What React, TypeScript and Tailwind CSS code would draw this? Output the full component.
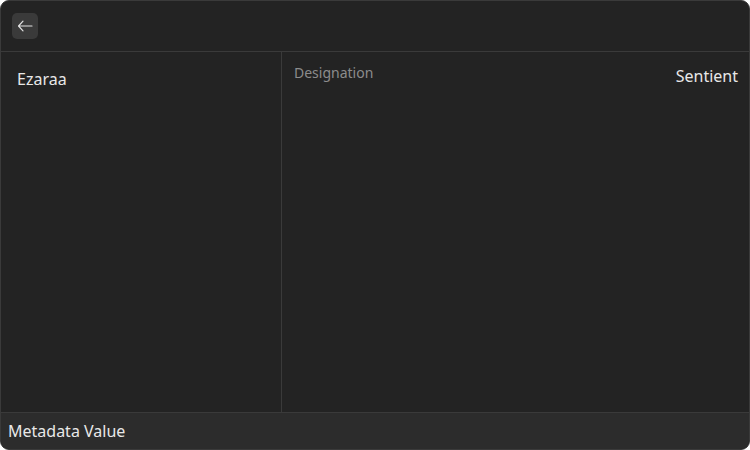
import React from 'react'

export default function App() {
  return (
    <div className="w-[750px] h-[450px] bg-white" style={{ fontFamily: '"Noto Sans", sans-serif' }}>
      <div className="w-full h-full flex flex-col bg-[#232323] border border-[#3a3a3a] rounded-[9px] overflow-hidden text-[#e8e8e8]">
        {/* header */}
        <div className="h-[51px] shrink-0 flex items-center px-[11px] border-b border-[#3a3a3a]">
          <button className="w-[26px] h-[26px] rounded-[5px] bg-[#3a3a3a] flex items-center justify-center text-[#e0e0e0]">
            <svg width="16" height="16" viewBox="0 0 16 16" fill="none" stroke="currentColor" strokeWidth="1.2" strokeLinecap="round" strokeLinejoin="round">
              <path d="M15 8H1.5M6 3.2 1.5 8 6 12.8" />
            </svg>
          </button>
        </div>

        {/* body */}
        <div className="flex-1 flex min-h-0">
          <div className="w-[281px] shrink-0 border-r border-[#3a3a3a] px-4 pt-[15px]">
            <div className="text-[16px] leading-[24px]">Ezaraa</div>
          </div>
          <div className="flex-1 flex justify-between items-start pl-[12px] pr-[11px] pt-[11px]">
            <div className="text-[14px] leading-[20px] text-[#8c8c8c]">Designation</div>
            <div className="text-[16px] leading-[24px] mt-[1px]">Sentient</div>
          </div>
        </div>

        {/* footer */}
        <div className="h-[37px] shrink-0 bg-[#2c2c2c] border-t border-[#3a3a3a] flex items-center px-[7px]">
          <span className="text-[16px] leading-[24px]">Metadata Value</span>
        </div>
      </div>
    </div>
  )
}
